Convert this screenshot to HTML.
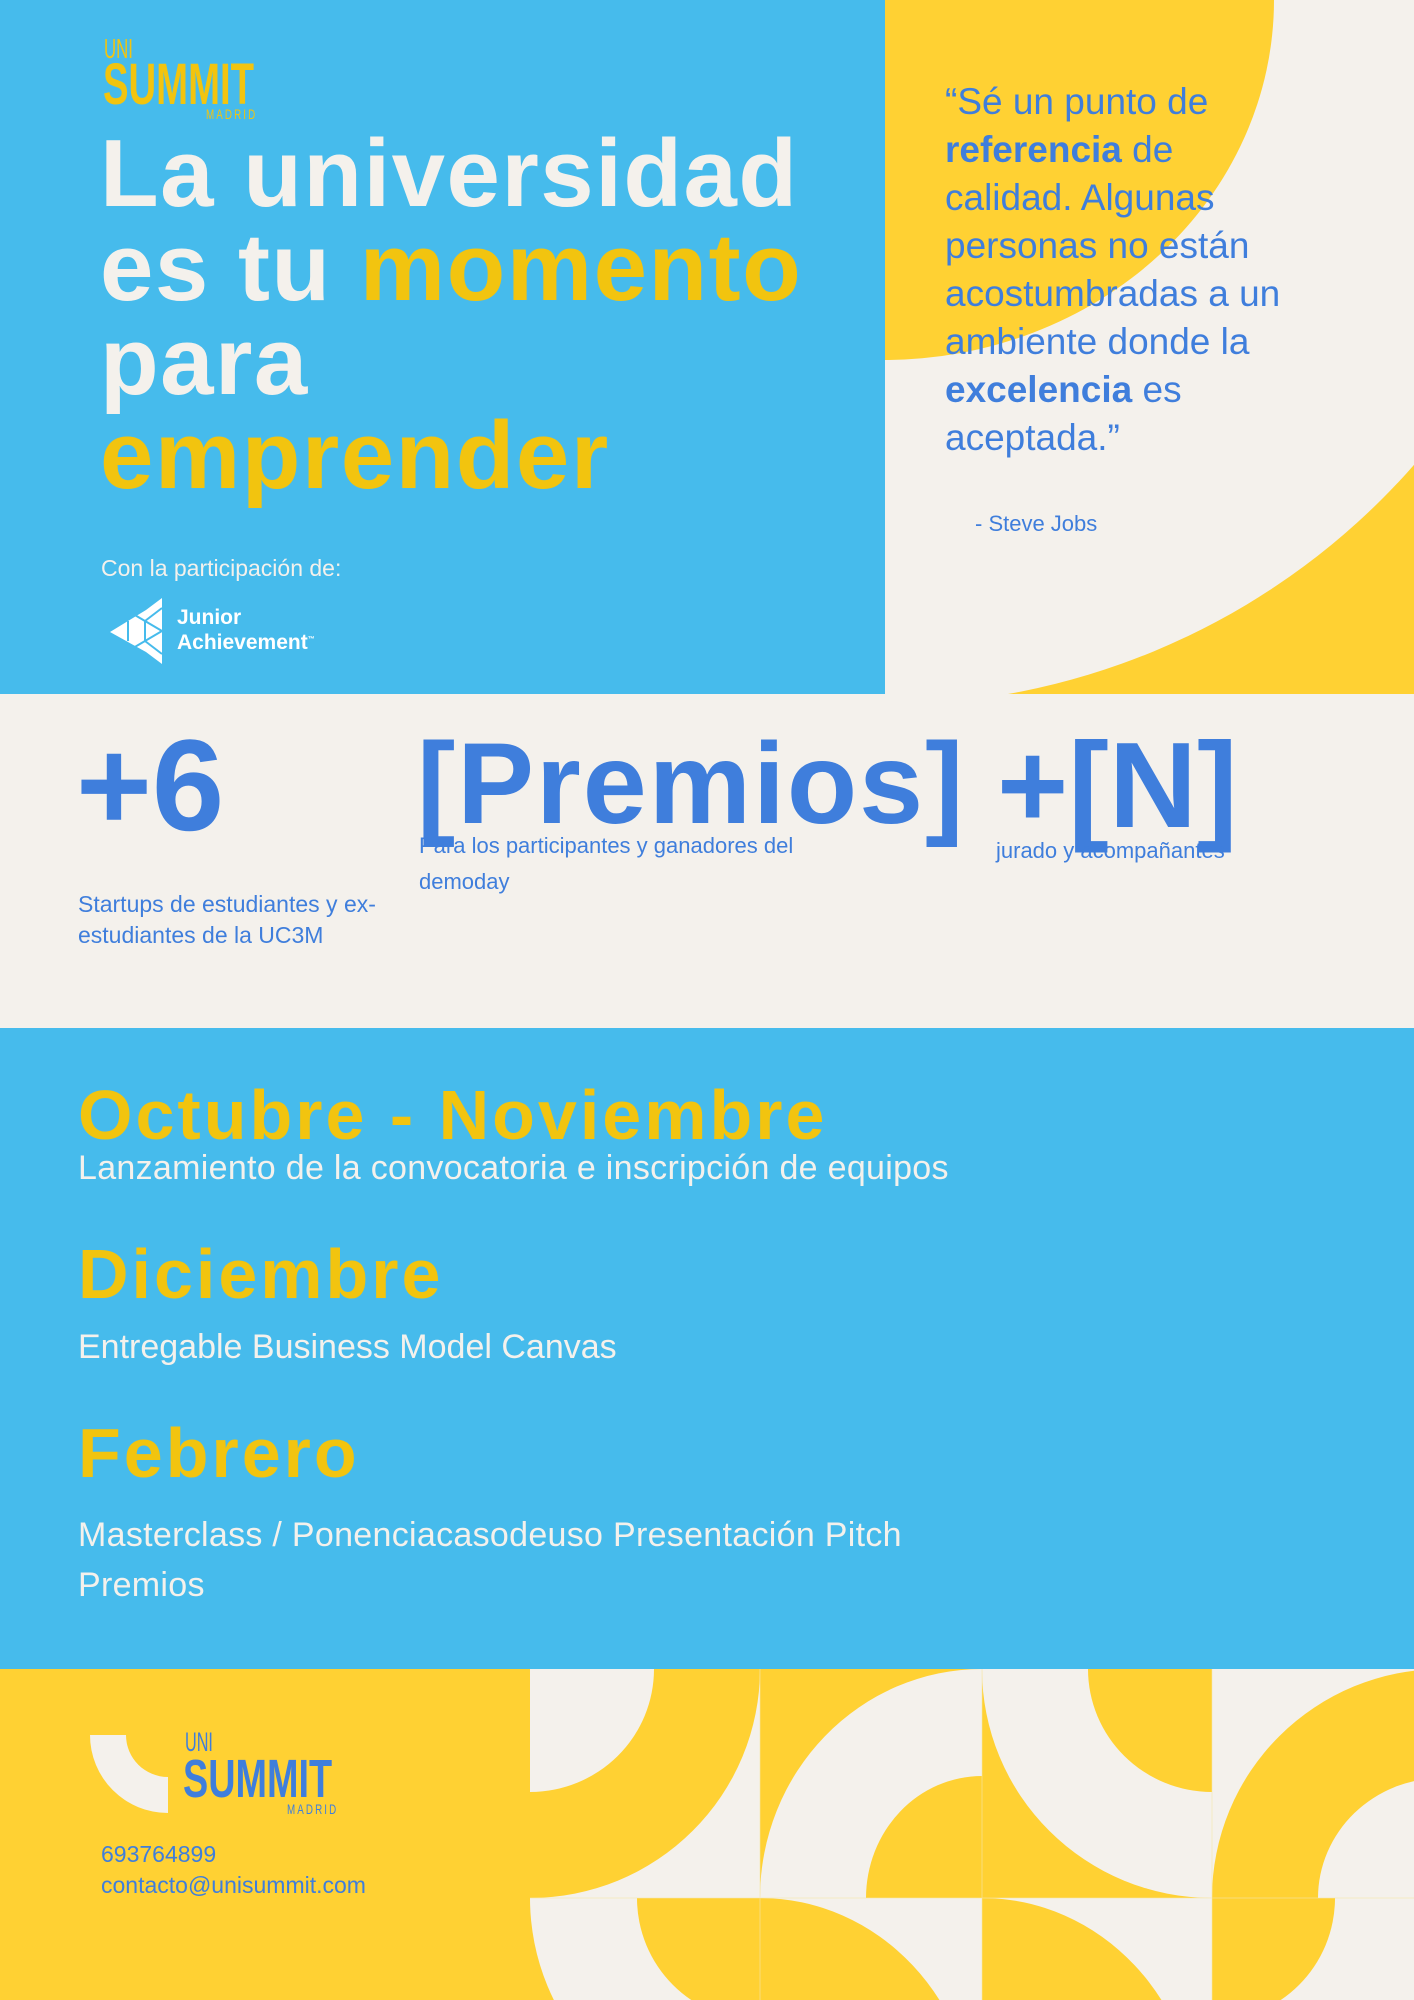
<!DOCTYPE html>
<html><head><meta charset="utf-8"><style>
*{margin:0;padding:0;box-sizing:border-box}
html,body{width:1414px;height:2000px;overflow:hidden}
body{position:relative;background:#F4F1EC;font-family:"Liberation Sans",sans-serif}
.a{position:absolute;white-space:nowrap}
.b{font-weight:bold}
</style></head><body>
<svg class="a" style="left:0;top:0" width="1414" height="2000">
<rect x="884" y="0" width="530" height="694" fill="#FFD133"/>
<circle cx="884" cy="0" r="705" fill="#F4F1EC"/>
<ellipse cx="884" cy="0" rx="390" ry="360" fill="#FFD133"/>
<rect x="0" y="0" width="885" height="694" fill="#46BBEC"/>
<rect x="0" y="1028" width="1414" height="641" fill="#46BBEC"/>
<rect x="0" y="1669" width="1414" height="331" fill="#FFD133"/>
<rect x="530" y="1669" width="230" height="229" fill="#F4F1EC"/>
<path d="M530 1669 H760 A230 229 0 0 1 530 1898 Z" fill="#FFD133"/>
<path d="M530 1669 H654 A124 123 0 0 1 530 1792 Z" fill="#F4F1EC"/>
<rect x="760" y="1669" width="222" height="229" fill="#FFD133"/>
<path d="M982 1898 H760 A222 229 0 0 1 982 1669 Z" fill="#F4F1EC"/>
<path d="M982 1898 H866 A116 122 0 0 1 982 1776 Z" fill="#FFD133"/>
<rect x="982" y="1669" width="230" height="229" fill="#FFD133"/>
<path d="M1212 1669 H982 A230 229 0 0 0 1212 1898 Z" fill="#F4F1EC"/>
<path d="M1212 1669 H1088 A124 123 0 0 0 1212 1792 Z" fill="#FFD133"/>
<rect x="1212" y="1669" width="202" height="229" fill="#F4F1EC"/>
<path d="M1442 1898 H1212 A230 229 0 0 1 1442 1669 Z" fill="#FFD133"/>
<path d="M1442 1898 H1318 A124 120 0 0 1 1442 1778 Z" fill="#F4F1EC"/>
<rect x="530" y="1898" width="230" height="102" fill="#FFD133"/>
<path d="M760 1898 H530 A230 230 0 0 0 760 2128 Z" fill="#F4F1EC"/>
<path d="M760 1898 H637 A123 123 0 0 0 760 2021 Z" fill="#FFD133"/>
<rect x="760" y="1898" width="222" height="102" fill="#F4F1EC"/>
<path d="M760 1898 A216 230 0 0 1 976 2128 H760 Z" fill="#FFD133"/>
<rect x="982" y="1898" width="230" height="102" fill="#F4F1EC"/>
<path d="M982 1898 A216 230 0 0 1 1198 2128 H982 Z" fill="#FFD133"/>
<rect x="1212" y="1898" width="202" height="102" fill="#F4F1EC"/>
<path d="M1212 1898 H1335 A123 123 0 0 1 1212 2021 Z" fill="#FFD133"/>
<g stroke="#F7E6A8" stroke-width="1" opacity=".6"><line x1="530" y1="1898" x2="1414" y2="1898"/><line x1="760" y1="1669" x2="760" y2="2000"/><line x1="982" y1="1669" x2="982" y2="2000"/><line x1="1212" y1="1669" x2="1212" y2="2000"/></g>
<path d="M90 1735 H126 A42 42 0 0 0 168 1777 V1813 A78 78 0 0 1 90 1735 Z" fill="#F4F1EC"/>
<g fill="#fff">
<polygon points="162,598 162,664 146,652 110,632 146,610"/>
</g>
<g stroke="#46BBEC" stroke-width="2" fill="none">
<line x1="162" y1="631" x2="128" y2="611"/>
<line x1="162" y1="631" x2="128" y2="651"/>
<line x1="145" y1="621" x2="145" y2="641"/>
<line x1="128" y1="621" x2="128" y2="641"/>
<line x1="162" y1="608" x2="145" y2="621"/>
<line x1="162" y1="654" x2="145" y2="641"/>
</g>
</svg>

<div class="a" style="left:104px;top:35px;font-size:28px;line-height:1;color:#F2C40F;transform:scaleX(.6);transform-origin:0 0">UNI</div>
<div class="a b" style="left:103px;top:56px;font-size:58px;line-height:1;color:#F2C40F;transform:scaleX(.66);transform-origin:0 0">SUMMIT</div>
<div class="a" style="left:206px;top:107px;font-size:14px;line-height:1;color:#F2C40F;letter-spacing:3px;transform:scaleX(.7);transform-origin:0 0">MADRID</div>

<div class="a b" style="left:100px;top:127px;font-size:96px;line-height:94px;color:#F4F1EC;letter-spacing:1.5px">La universidad<br>es tu <span style="color:#F2C40F">momento</span><br>para<br><span style="color:#F2C40F">emprender</span></div>

<div class="a" style="left:101px;top:555px;font-size:23px;color:#F4F1EC">Con la participación de:</div>
<div class="a" style="left:177px;top:607px;font-size:21px;line-height:22px;color:#fff;font-weight:bold">Junior<br>Achievement<sup style="font-size:7px">™</sup></div>

<div class="a" style="left:945px;top:78px;font-size:37px;line-height:48px;color:#3F7EDC">“Sé un punto de<br><b>referencia</b> de<br>calidad. Algunas<br>personas no están<br>acostumbradas a un<br>ambiente donde la<br><b>excelencia</b> es<br>aceptada.”</div>
<div class="a" style="left:975px;top:511px;font-size:22px;color:#3F7EDC">- Steve Jobs</div>

<div class="a b" style="left:76px;top:720px;font-size:130px;line-height:1;color:#3F7EDC">+6</div>
<div class="a b" style="left:417px;top:727px;font-size:115px;line-height:1;color:#3F7EDC;letter-spacing:2px">[Premios]</div>
<div class="a b" style="left:997px;top:724px;font-size:122px;line-height:1;color:#3F7EDC">+[N]</div>
<div class="a" style="left:419px;top:828px;font-size:22px;line-height:36px;color:#3F7EDC">Para los participantes y ganadores del<br>demoday</div>
<div class="a" style="left:996px;top:833px;font-size:22px;line-height:36px;color:#3F7EDC">jurado y acompañantes</div>
<div class="a" style="left:78px;top:889px;font-size:23px;line-height:31px;color:#3F7EDC">Startups de estudiantes y ex-<br>estudiantes de la UC3M</div>

<div class="a b" style="left:78px;top:1080px;font-size:70px;line-height:1;color:#F2C40F;letter-spacing:3px">Octubre - Noviembre</div>
<div class="a" style="left:78px;top:1151px;font-size:34px;line-height:1;color:#F4F1EC;letter-spacing:.3px">Lanzamiento de la convocatoria e inscripción de equipos</div>
<div class="a b" style="left:78px;top:1239px;font-size:70px;line-height:1;color:#F2C40F;letter-spacing:3px">Diciembre</div>
<div class="a" style="left:78px;top:1330px;font-size:34px;line-height:1;color:#F4F1EC">Entregable Business Model Canvas</div>
<div class="a b" style="left:78px;top:1418px;font-size:70px;line-height:1;color:#F2C40F;letter-spacing:3px">Febrero</div>
<div class="a" style="left:78px;top:1510px;font-size:34px;line-height:50px;color:#F4F1EC;letter-spacing:.3px">Masterclass / Ponenciacasodeuso Presentación Pitch<br>Premios</div>

<div class="a" style="left:185px;top:1729px;font-size:27px;line-height:1;color:#3F7EDC;transform:scaleX(.6);transform-origin:0 0">UNI</div>
<div class="a b" style="left:183px;top:1752px;font-size:54px;line-height:1;color:#3F7EDC;transform:scaleX(.7);transform-origin:0 0">SUMMIT</div>
<div class="a" style="left:287px;top:1802px;font-size:14px;line-height:1;color:#3F7EDC;letter-spacing:3px;transform:scaleX(.7);transform-origin:0 0">MADRID</div>
<div class="a" style="left:101px;top:1843px;font-size:23px;line-height:1;color:#3F7EDC">693764899</div>
<div class="a" style="left:101px;top:1874px;font-size:23px;line-height:1;color:#3F7EDC">contacto@unisummit.com</div>
</body></html>
